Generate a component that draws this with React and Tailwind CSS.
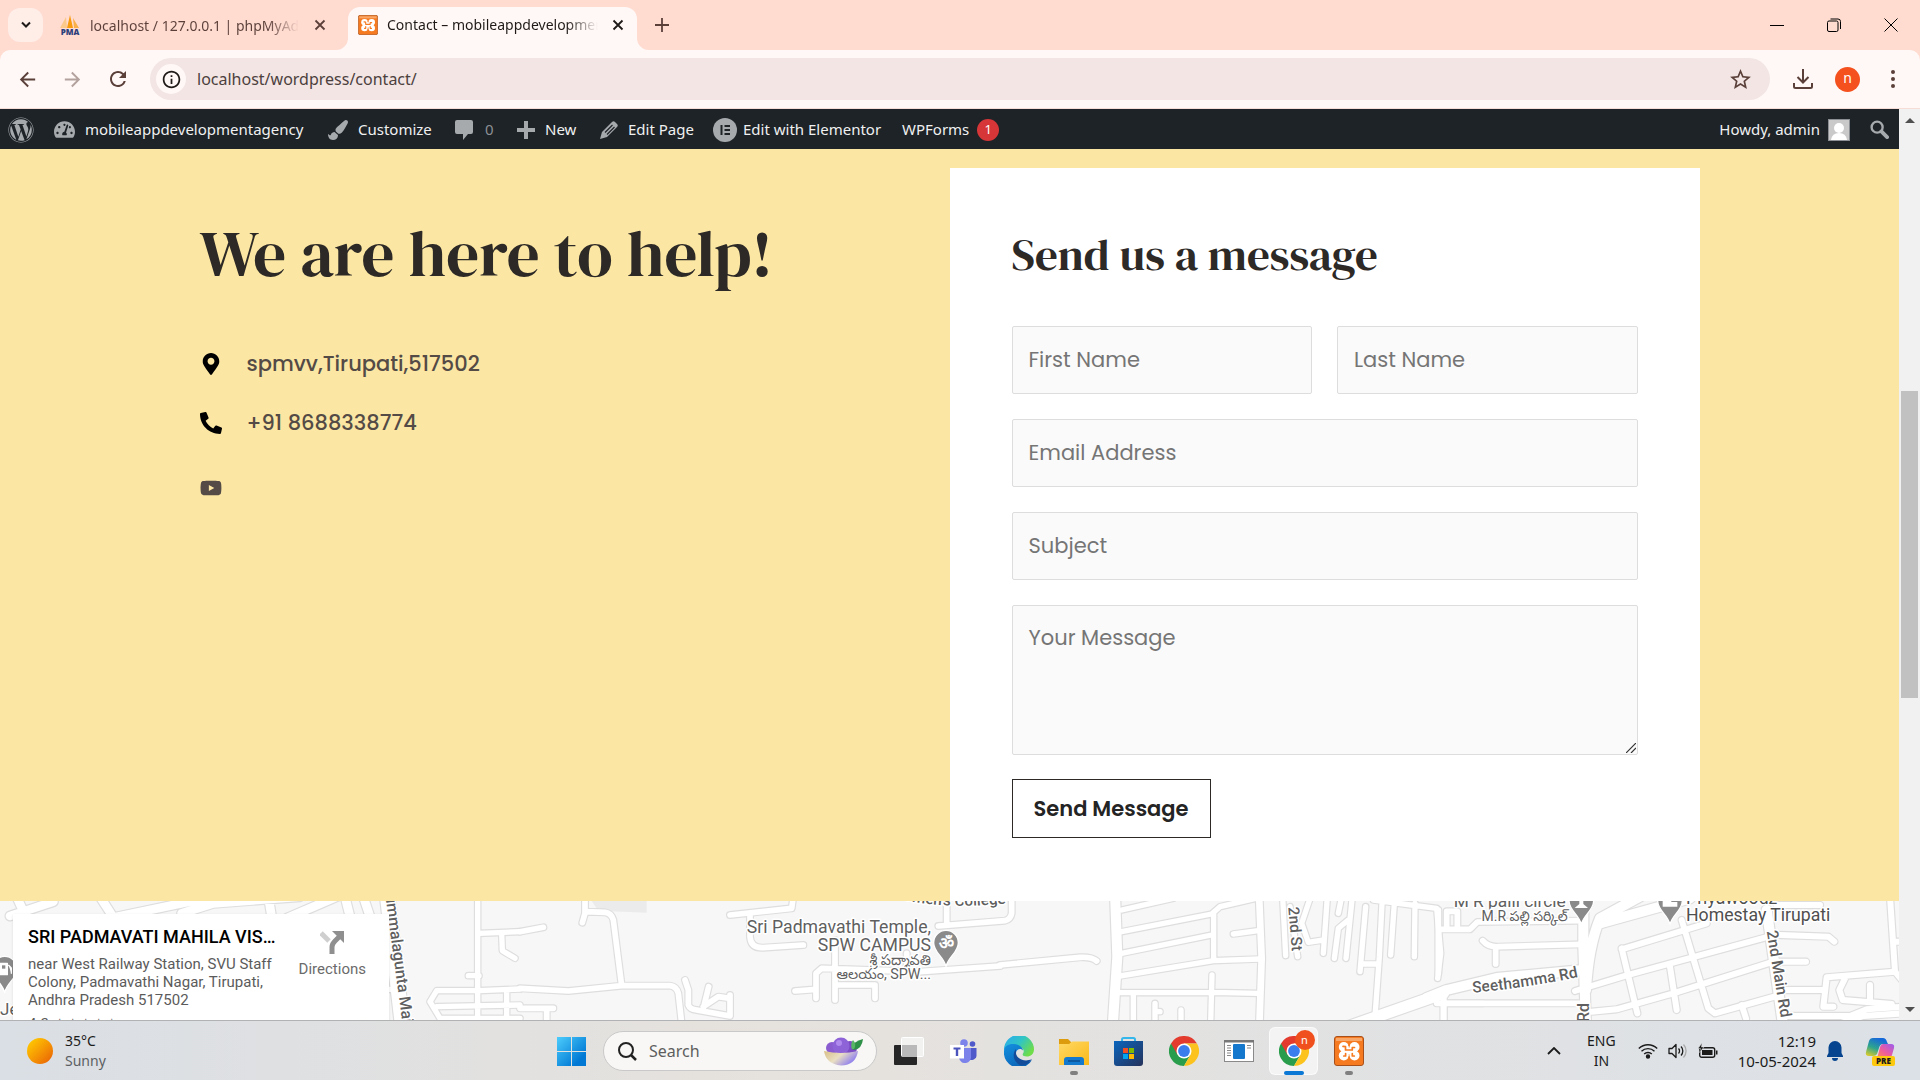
import React from "react";
import { FaWordpress, FaTachometerAlt, FaPaintBrush, FaMapMarkerAlt, FaPhoneAlt, FaYoutube } from "react-icons/fa";
import { MdStarBorder, MdRefresh, MdInfoOutline, MdArrowBack, MdArrowForward } from "react-icons/md";

const UI = "font-['Segoe_UI','Noto_Sans',sans-serif]";
const POP = "font-['Poppins','Inter',sans-serif]";
const SERIF = "font-['DM_Serif_Display','Liberation_Serif',serif]";

function CloseX({ className }) {
  return (
    <svg viewBox="0 0 12 12" className={className} fill="none" stroke="currentColor" strokeWidth="1.8">
      <path d="M1.5 1.5l9 9M10.5 1.5l-9 9" />
    </svg>
  );
}

function PmaIcon() {
  return (
    <svg viewBox="0 0 22 20" className="h-5 w-[22px] shrink-0">
      <path d="M7 2L1 13h7z" fill="#fbc98a" />
      <path d="M11 0L8 13h6z" fill="#f89c0e" />
      <path d="M14 3l1 10h5z" fill="#f9b04a" />
      <text x="11" y="19.500" fontSize="8" fontWeight="800" textAnchor="middle" fill="#2c3f7c" fontFamily="Open Sans">PMA</text>
    </svg>
  );
}

function XamppIcon({ className }) {
  return (
    <svg viewBox="0 0 30 30" className={className}>
      <rect x="0.500" y="0.500" width="29" height="29" rx="2.500" fill="#f57a20" stroke="#a8501b" />
      <path d="M2 2h26v3H2z" fill="#f9a669" />
      <g fill="#fff">
        <circle cx="9.800" cy="11" r="5" /><circle cx="20.500" cy="11" r="5" />
        <circle cx="9.800" cy="19.500" r="5" /><circle cx="20.500" cy="19.500" r="5" />
        <path d="M10 10l3 1.500h4L20 10l2 5.300-2 5-3-1.800h-4L10 20.300 8 15.300z" />
      </g>
      <path d="M9 10.300l2.500.400v3.300h6.800v-2.500h2.200M9.800 20h1.800v-2.500M18.300 17.500V20h2" fill="none" stroke="#f57a20" strokeWidth="1.700" strokeLinejoin="round" strokeLinecap="round" />
      <path d="M4 15.300l2.500 0M24 15.300h2.500M15 8.500v1.500M15 20.500v2" stroke="#f57a20" strokeWidth="1.500" />
    </svg>
  );
}

function TabStrip() {
  return (
    <header className="flex h-[50px] shrink-0 items-end bg-[#ffdbd0] text-[#1f1a18]">
      <button aria-label="Search tabs" className="mb-2 ml-2 flex h-[34px] w-[35px] items-center justify-center rounded-xl bg-[#ffede8]">
        <svg viewBox="0 0 12 8" className="h-2 w-3" fill="none" stroke="currentColor" strokeWidth="2"><path d="M2 1.500l4 4 4-4" /></svg>
      </button>
      <div className="flex h-[50px] w-[305px] shrink-0 items-center pl-4 text-[#5b403a]">
        <PmaIcon />
        <span className="ml-[9px] w-[209px] overflow-hidden whitespace-nowrap bg-linear-to-r from-[#5b403a] from-85% to-transparent bg-clip-text text-[14px] text-transparent">localhost / 127.0.0.1 | phpMyAdmin</span>
        <button aria-label="Close tab" className="ml-[15px]"><CloseX className="h-3 w-3" /></button>
      </div>
      <div className="relative flex h-[43px] w-[289px] shrink-0 items-center rounded-t-xl bg-[#fff8f6] pl-2.5 pb-2">
        <svg viewBox="0 0 12 12" className="absolute -left-3 bottom-0 h-3 w-3" fill="#fff8f6"><path d="M12 0v12H0A12 12 0 0 0 12 0z" /></svg>
        <svg viewBox="0 0 12 12" className="absolute -right-3 bottom-0 h-3 w-3" fill="#fff8f6"><path d="M0 0v12h12A12 12 0 0 1 0 0z" /></svg>
        <XamppIcon className="h-5 w-5 shrink-0" />
        <span className="ml-[9px] w-[211px] overflow-hidden whitespace-nowrap bg-linear-to-r from-[#1f1a18] from-85% to-transparent bg-clip-text text-[14px] text-transparent">Contact – mobileappdevelopmentagency</span>
        <button aria-label="Close tab" className="ml-3.5"><CloseX className="h-3 w-3" /></button>
      </div>
      <button aria-label="New tab" className="mb-[18px] ml-[18px] text-[#5b403a]">
        <svg viewBox="0 0 14 14" className="h-3.5 w-3.5" stroke="currentColor" strokeWidth="1.800"><path d="M7 0v14M0 7h14" /></svg>
      </button>
      <div className="mb-[18px] ml-auto flex items-center gap-[43px] pr-[22px]">
        <button aria-label="Minimize"><svg viewBox="0 0 14 14" className="h-3.5 w-3.5" stroke="#000"><path d="M0 7.500h14" /></svg></button>
        <button aria-label="Restore"><svg viewBox="0 0 14 14" className="h-3.5 w-3.5" fill="none" stroke="#000"><rect x="0.500" y="3" width="10.500" height="10.500" rx="1.500" /><path d="M3.500 1h7.500a2.500 2.500 0 0 1 2.500 2.500V11" /></svg></button>
        <button aria-label="Close"><svg viewBox="0 0 14 14" className="h-3.5 w-3.5" stroke="#000"><path d="M.5.5l13 13M13.500.5l-13 13" /></svg></button>
      </div>
    </header>
  );
}

function Toolbar() {
  return (
    <div className="bg-[#ffdbd0]">
      <div className="flex h-[59px] items-center rounded-t-[10px] border-b border-[#f6ddd5] bg-[#fff8f6] text-[#5b403a]">
        <button aria-label="Back" className="ml-4"><MdArrowBack size={23} /></button>
        <button aria-label="Forward" className="ml-[22px] text-[#b3a19d]"><MdArrowForward size={23} /></button>
        <button aria-label="Reload" className="ml-[22px]"><MdRefresh size={24} /></button>
        <div className="ml-5 flex h-[42px] flex-1 items-center rounded-full bg-[#f2e5e4] pl-1.5 pr-[17px]">
          <button aria-label="Site information" className="flex h-[30px] w-[30px] items-center justify-center rounded-full bg-[#fff8f6] text-[#1f1a18]"><MdInfoOutline size={21} /></button>
          <label htmlFor="address" className="sr-only">Address</label>
          <input id="address" defaultValue="localhost/wordpress/contact/" className="ml-[11px] min-w-0 flex-1 bg-transparent text-[16px] text-[#4c403d] outline-none" />
          <button aria-label="Bookmark"><MdStarBorder size={25} /></button>
        </div>
        <button aria-label="Downloads" className="ml-[23px]">
          <svg viewBox="0 0 20 20" className="h-5 w-5" fill="none" stroke="currentColor" strokeWidth="2"><path d="M10 0v13M4.500 8l5.500 5.500L15.500 8M1 14v3.500a1.500 1.500 0 0 0 1.500 1.500h15a1.500 1.500 0 0 0 1.500-1.500V14" /></svg>
        </button>
        <button aria-label="Profile" className="ml-[22px] flex h-[25px] w-[25px] items-center justify-center rounded-full bg-[#f4511e] pb-0.5 text-sm leading-none text-white">n</button>
        <button aria-label="Menu" className="ml-[31px] mr-[25px]">
          <svg viewBox="0 0 4 18" className="h-[18px] w-1" fill="currentColor"><circle cx="2" cy="2" r="2" /><circle cx="2" cy="9" r="2" /><circle cx="2" cy="16" r="2" /></svg>
        </button>
      </div>
    </div>
  );
}

function AdminBar() {
  const link = "flex shrink-0 items-center";
  return (
    <nav className="flex h-10 shrink-0 items-center bg-[#1d2327] pt-px text-[15px] text-[#f0f0f1]">
      <a href="#wp" aria-label="WordPress" className="ml-2 text-[#a7aaad]"><FaWordpress size={26} /></a>
      <a href="#site" className={`${link} ml-5 w-[252px] gap-2.5`}><FaTachometerAlt size={21} className="text-[#a7aaad]" />mobileappdevelopmentagency</a>
      <a href="#customize" className={`${link} ml-[22px] w-[106px] gap-2.5`}><FaPaintBrush size={20} className="text-[#a7aaad]" />Customize</a>
      <a href="#comments" className={`${link} ml-[21px] w-10 gap-3 text-[#8c8f94]`}>
        <svg viewBox="0 0 18 20" className="h-5 w-[18px]" fill="#a7aaad"><path d="M2 0h14a2 2 0 0 1 2 2v10a2 2 0 0 1-2 2h-3l-5 6v-6H2a2 2 0 0 1-2-2V2a2 2 0 0 1 2-2z" /></svg>0
      </a>
      <a href="#new" className={`${link} ml-[22px] w-[63px] gap-2.5`}>
        <svg viewBox="0 0 18 18" className="h-[18px] w-[18px]" fill="#a7aaad"><path d="M7 0h4v7h7v4h-7v7H7v-7H0V7h7z" /></svg>New
      </a>
      <a href="#edit" className={`${link} ml-5 w-[98px] gap-2.5`}>
        <svg viewBox="0 0 18 18" className="h-[18px] w-[18px]"><path d="M12 1q1.500-1.500 3 0l2 2q1.500 1.500 0 3L7 16l-7 2 2-7z" fill="#a7aaad" /><path d="M12.500 4L5 11.500M14.500 6L7 13.500" stroke="#1d2327" strokeWidth="1.200" /></svg>Edit Page
      </a>
      <a href="#elementor" className={`${link} ml-[15px] w-[172px] gap-1.5`}>
        <svg viewBox="0 0 24 24" className="h-6 w-6"><circle cx="12" cy="12" r="12" fill="#a7aaad" /><path d="M7.500 7h2v10h-2zM11.500 7h5.500v2h-5.500zM11.500 11h5.500v2h-5.500zM11.500 15h5.500v2h-5.500z" fill="#1d2327" /></svg>
        Edit with Elementor
      </a>
      <a href="#wpforms" className={`${link} ml-[17px] gap-2`}>WPForms<span className="flex h-[22px] w-[22px] items-center justify-center rounded-full bg-[#d63638] text-[13px] text-white">1</span></a>
      <a href="#profile" className={`${link} ml-auto gap-2`}>Howdy, admin
        <svg viewBox="0 0 22 22" className="h-[22px] w-[22px]"><rect width="22" height="22" fill="#8c8f94" /><rect x="1" y="1" width="20" height="20" fill="#c9c9c9" /><circle cx="11" cy="9" r="5" fill="#fff" /><path d="M3 21q1-7 8-7t8 7z" fill="#fff" /></svg>
      </a>
      <a href="#search" aria-label="Search" className="ml-5 mr-2.5">
        <svg viewBox="0 0 20 20" className="h-[19px] w-[19px]" fill="none" stroke="#a7aaad"><circle cx="7.500" cy="7.500" r="5.800" strokeWidth="2.500" /><path d="M12 12l6 6" strokeWidth="4" strokeLinecap="round" /></svg>
      </a>
    </nav>
  );
}

function Field({ id, label, type = "text" }) {
  return (
    <div className="flex">
      <label htmlFor={id} className="sr-only">{label}</label>
      <input id={id} type={type} placeholder={label} className="h-[68px] w-full min-w-0 rounded-xs border border-[#ddd] bg-[#fafafa] px-4 pb-0.5 text-[21px] outline-none placeholder:text-[#757575]" />
    </div>
  );
}

function ContactSection() {
  return (
    <section className="shrink-0 bg-[#fbe7a3] px-4 pt-[19px]">
      <div className={`mx-auto grid max-w-[1500px] grid-cols-2 ${POP}`}>
        <div className="pt-12">
          <h1 className={`${SERIF} text-[65px] leading-[76px] font-normal text-[#2d2926]`}>We are here to help!</h1>
          <ul className="mt-14 flex flex-col gap-[27px] text-[21px] leading-8 font-medium text-[#544a46]">
            <li className="flex items-center"><span className="flex w-[47px]"><FaMapMarkerAlt size={22} className="text-black" /></span>spmvv,Tirupati,517502</li>
            <li className="flex items-center"><span className="flex w-[47px]"><FaPhoneAlt size={22} className="text-black" /></span>+91 8688338774</li>
          </ul>
          <a href="#youtube" aria-label="YouTube" className="mt-[38px] inline-flex text-[#544a46]"><FaYoutube size={22} /></a>
        </div>
        <form className="bg-white px-[62px] pt-[59px] pb-[63px]" onSubmit={(e) => e.preventDefault()}>
          <h2 className={`${SERIF} text-[45px] leading-[54px] font-normal text-[#2d2926]`}>Send us a message</h2>
          <div className="mt-[45px] grid grid-cols-2 gap-[25px]">
            <Field id="first" label="First Name" />
            <Field id="last" label="Last Name" />
            <div className="col-span-2"><Field id="email" label="Email Address" type="email" /></div>
            <div className="col-span-2"><Field id="subject" label="Subject" /></div>
            <div className="relative col-span-2 flex">
              <label htmlFor="message" className="sr-only">Your Message</label>
              <textarea id="message" placeholder="Your Message" className="h-[150px] w-full resize-none rounded-xs border border-[#ddd] bg-[#fafafa] px-4 py-4 text-[21px] leading-8 outline-none placeholder:text-[#757575]" />
              <svg viewBox="0 0 10 10" className="pointer-events-none absolute right-0.5 bottom-0.5 h-2.5 w-2.5" stroke="#333" strokeWidth="1.200"><path d="M0 10L10 0M5 10l5-5" /></svg>
            </div>
          </div>
          <button className="mt-6 h-[59px] border border-[#2d2926] px-[21px] text-[21px] font-semibold text-[#242424]">Send Message</button>
        </form>
      </div>
    </section>
  );
}

/* Map streets: [x origin of the district, street width, path] */
const ROADS = [
  [0, 26, "M50 20L75 75M30 78L160 35M300 20L345 90M330 85L640 20M545 70L640 40M640 40L900 20M805 20L815 80M860 85L1010 20M1035 20L1050 80M1090 20L1110 80"],
  [0, 44, "M1162 20L1205 390L1208 420"],
  [0, 16, "M1433 20V400M1437 130L1560 125M1505 130L1507 182L1545 205M1405 257H1437M1560 297L1437 302H1310L1290 335L1320 385H1560M1520 300V390M1310 350L1560 345M1150 298H1185"],
  [1560, 17, "M0 295L145 303L305 287H450Q470 290 475 310L485 400M305 287L280 90Q275 70 255 67L200 65M195 20V70L187 98M0 125L70 112M0 355H100M80 355V400"],
  [1560, 17, "M495 270L505 300V345Q510 358 530 360L630 378V315M550 355L566 290M550 350L595 320L630 325"],
  [1560, 17, "M630 75L815 55L820 20M690 75V140Q692 175 730 173L850 165M825 303L888 298V325V250L905 235L1200 245L1440 228M945 150V330M945 285H1065V325M1160 190V240"],
  [1560, 17, "M1255 108L1455 92Q1472 88 1475 70V20M1280 20V105"],
  [3000, 17, "M0 225L240 202Q275 200 290 213"],
  [3000, 30, "M345 10L352 200L338 410"],
  [3000, 16, "M365 60L520 25M365 125L635 72L660 50L790 20M365 190L635 135M360 258L640 212L780 207M641 72V212M700 132L775 122M355 308L640 307L775 310M636 255L632 400M400 310V400M465 340V400M465 365H480M543 360V400"],
  [3000, 20, "M777 10L785 205L778 410"],
  [3000, 16, "M848 20L857 197M870 50L893 200M932 20L905 100L925 157L970 150M982 20L970 190M1025 20L1015 70M1057 20L1038 205M1042 92L1015 115L1003 205M1097 50L1080 245M1085 222H1130M1147 20L1138 200L1125 380M1183 40L1172 195M1245 40L1243 200M1120 30L1310 55L1322 190L1313 265M1332 320V400M1332 340H1450"],
  [3000, 34, "M1040 412L1330 310"],
  [4320, 30, "M-40 324L20 300L170 264L430 240"],
  [4320, 17, "M-10 340H430M10 330V400M-5 60V250M20 64H52V112M20 64V118M-5 118H90L112 96L420 92M128 152Q145 172 175 170L425 163M167 175V222"],
  [4320, 30, "M430 30L430 170L438 410M600 20L480 85Q445 170 438 300M750 25L480 100"],
  [4320, 18, "M405 303L560 256L985 140M455 365L530 358L700 310L1000 215M545 178L800 100M545 175L592 370M725 90L805 355L825 370L1010 318M690 230L710 360M905 345L918 385"],
  [4320, 30, "M980 60L1000 200L1030 410"],
  [4320, 18, "M1020 135L1165 140L1183 155M1010 215H1098M1030 300H1145M1350 20L1365 245L1160 262L1150 350H1180M1365 245L1390 275M1215 265L1198 300L1208 330L1355 342M1290 285V335M1040 378H1230L1280 358L1390 350M1200 400L1270 378L1390 370M1365 155H1390M1010 45H1140"],
];

function Pin({ x, y, children }) {
  return (
    <g transform={`translate(${x} ${y})`}>
      <path d="M0 108C-6 78-37 66-37 36a37 37 0 0 1 74 0C37 66 6 78 0 108z" fill="#8a8a8a" stroke="#fff" strokeWidth="4" />
      {children}
    </g>
  );
}

function MapView() {
  const halo = { stroke: "#fff", strokeWidth: 9, paintOrder: "stroke", strokeLinejoin: "round" };
  return (
    <section aria-label="Map" className="relative min-h-[100px] flex-1 overflow-hidden bg-[#f7f7f7] font-['Roboto','Noto_Sans_Telugu',sans-serif]">
      <svg viewBox="0 33 5697 357" preserveAspectRatio="xMidYMin slice" className="block h-full w-full" fill="none" strokeLinecap="round" strokeLinejoin="round">
        <path d="M1775 33H1940V68L1795 62z" fill="#ebebeb" />
        <g stroke="#dedede">{ROADS.map(([o, w, d], i) => <path key={i} transform={`translate(${o} 0)`} strokeWidth={w + 7} d={d} />)}</g>
        <g stroke="#fff">{ROADS.map(([o, w, d], i) => <path key={i} transform={`translate(${o} 0)`} strokeWidth={w} d={d} />)}</g>
        <path id="tumma" d="M1152 -12L1217 473" />
        <path id="women" d="M2672 16Q2800 64 3040 38" />
        <path id="second" d="M3865 52L3877 200" />
        <path id="seeth" d="M4418 308Q4570 295 4730 262" />
        <path id="mainrd" d="M5300 124L5345 400" />
        <g fill="#5f5f5f" fontSize="48" style={halo}>
          <text fontWeight="500"><textPath href="#tumma">Tummalagunta Main Rd</textPath></text>
          <text fontWeight="500" fontSize="46"><textPath href="#women">Women's College</textPath></text>
          <text fontWeight="500" fontSize="46"><textPath href="#second">2nd St</textPath></text>
          <text fontWeight="500" fontSize="47"><textPath href="#seeth">Seethamma Rd</textPath></text>
          <text fontWeight="500" fontSize="47"><textPath href="#mainrd">2nd Main Rd</textPath></text>
          <text x="4766" y="396" fontWeight="500" transform="rotate(-90 4766 396)">Rd</text>
          <g textAnchor="end" fontSize="53">
            <text x="2793" y="130">Sri Padmavathi Temple,</text>
            <text x="2793" y="183">SPW CAMPUS</text>
            <text x="2793" y="226" fontSize="43">శ్రీ పద్మావతి</text>
            <text x="2793" y="267" fontSize="43">ఆలయం, SPW...</text>
            <text x="4697" y="50" fontSize="52">M R palli circle</text>
            <text x="4703" y="94" fontSize="42">M.R పల్లి సర్కిల్</text>
          </g>
          <g fontSize="53" fill="#4f4f4f">
            <text x="5058" y="41">Priyawoodz</text>
            <text x="5058" y="94">Homestay Tirupati</text>
          </g>
          <text x="0" y="374" fontSize="51">Je</text>
        </g>
        <Pin x={2838} y={122}><text y="54" fontSize="50" fontWeight="700" fill="#fff" textAnchor="middle">ॐ</text></Pin>
        <Pin x={4744} y={-4}><path d="M-20 58h40l-14-12V20H-6v26z" fill="#fff" /></Pin>
        <Pin x={5010} y={-4}><path d="M-22 30v24h44V40H4V30z" fill="#fff" /></Pin>
        <Pin x={14} y={200}><path d="M-14 20h22v34h-22zM12 26l8 8v16" fill="#fff" stroke="#fff" strokeWidth="4" /><rect x="-8" y="26" width="10" height="10" fill="#8a8a8a" /></Pin>
      </svg>
      <div className="absolute top-[13px] left-[13px] flex h-40 w-[376px] justify-between bg-white pt-[11px] pr-[23px] pl-[15px] shadow">
        <div className="w-[250px]">
          <h3 className="truncate text-[18px] leading-6 font-medium text-black">SRI PADMAVATI MAHILA VISVAVIDYALAYAM</h3>
          <p className="mt-1.5 text-[15px] leading-[18px] text-[#5b5b5b]">near West Railway Station, SVU Staff<br />Colony, Padmavathi Nagar, Tirupati,<br />Andhra Pradesh 517502</p>
          <p className="mt-1.5 text-[15px] leading-[18px] text-[#5b5b5b]">4.2 ★★★★☆</p>
        </div>
        <a href="#directions" className="mt-[5px] flex flex-col items-center text-[15px] text-[#6b6b6b]">
          <svg viewBox="0 0 24 24" className="h-6 w-6" fill="none"><path d="M1 3l8 8" stroke="#cfcfcf" strokeWidth="5" /><path d="M12 24v-7q0-3 3-6l5-5" stroke="#8f8f8f" strokeWidth="5" /><path d="M12 1h12v12z" fill="#8f8f8f" /></svg>
          <span className="mt-1">Directions</span>
        </a>
      </div>
    </section>
  );
}

function ScrollBar() {
  return (
    <div aria-hidden="true" className="flex w-[21px] shrink-0 flex-col items-center bg-[#f1f1f1]">
      <svg viewBox="0 0 10 5" className="mt-[9px] h-[5px] w-2.5 shrink-0" fill="#505050"><path d="M0 5l5-5 5 5z" /></svg>
      <div className="flex-[268]" />
      <div className="w-[17px] flex-[306] bg-[#c1c1c1]" />
      <div className="flex-[309]" />
      <svg viewBox="0 0 10 5" className="mb-2 h-[5px] w-2.5 shrink-0" fill="#505050"><path d="M0 0l5 5 5-5z" /></svg>
    </div>
  );
}

function ChromeLogo() {
  return (
    <svg viewBox="0 0 30 30" className="h-[30px] w-[30px]">
      <path d="M15 15L2 7.500A15 15 0 0 1 28 7.500L15 7.500z" fill="#e33b2e" />
      <path d="M2 7.500A15 15 0 0 0 15 30L21.500 18.700 15 15z" fill="#2a9d4c" />
      <path d="M28 7.500A15 15 0 0 1 15 30L21.500 18.700 15 7.500z" fill="#fcc31e" />
      <path d="M2 7.500L8.500 18.700 15 7.500z" fill="#e33b2e" />
      <circle cx="15" cy="15" r="7.500" fill="#fff" /><circle cx="15" cy="15" r="5.900" fill="#3b7ded" />
    </svg>
  );
}

function EdgeLogo() {
  return (
    <svg viewBox="0 0 30 30" className="h-[30px] w-[30px]">
      <defs>
        <linearGradient id="eg1" x1="0" y1="0" x2="1" y2="0.600"><stop offset="0" stopColor="#2aa8f2" /><stop offset="0.550" stopColor="#31c5c4" /><stop offset="1" stopColor="#6fdc4a" /></linearGradient>
        <linearGradient id="eg2" x1="0" y1="0" x2="0.600" y2="1"><stop offset="0" stopColor="#1491e0" /><stop offset="1" stopColor="#0b62b5" /></linearGradient>
      </defs>
      <path d="M0 14A15 15 0 0 1 30 13.500c0 4.500-3.500 7-7 7-4 0-5-1.500-4-3 2-3-.5-7-5-7-6 0-12 2-14 3.500z" fill="url(#eg1)" />
      <path d="M0 15C0 10 5 7.500 10 8c5 .500 9 3.500 9 6.500-2-3-7-1.500-7 3 0 5 4 9 9 9 3 0 5-.800 7-2.500A15 15 0 0 1 0 15z" fill="url(#eg2)" />
      <path d="M12 13c-5 6-1.500 15 6 16.600A15 15 0 0 0 28 23c-8 4-16-1-16-6z" fill="#124c9a" />
    </svg>
  );
}

function TaskIcon({ label, dot, active, children }) {
  return (
    <button aria-label={label} className="relative flex h-[60px] w-[55px] shrink-0 items-center justify-center">
      {active && <span className="absolute inset-x-[3px] inset-y-1.5 rounded-md border border-white/60 bg-white/60" />}
      <span className="relative">{children}</span>
      {dot && <span className="absolute bottom-1.5 h-1 w-2 rounded-full bg-[#808080]" />}
      {active && <span className="absolute bottom-1.5 h-1 w-5 rounded-full bg-[#0a78d4]" />}
    </button>
  );
}

function Taskbar() {
  return (
    <footer className="grid h-[60px] shrink-0 grid-cols-[1fr_auto_1fr] items-center border-t border-[#b0b2b4] bg-linear-to-r from-[#dadfe5] via-[#e6e2dd] via-40% to-[#dce1e7] pb-[3px] text-[#1b1b1b]">
      <button className="flex items-center gap-3 pl-[27px] text-left text-[14px] leading-5">
        <span className="h-[26px] w-[26px] rounded-full bg-linear-to-br from-[#ffd400] to-[#e65a05]" />
        <span><span className="block">35°C</span><span className="block text-[#5c5f63]">Sunny</span></span>
      </button>
      <div className="flex items-center">
        <TaskIcon label="Start">
          <svg viewBox="0 0 29 29" className="h-[29px] w-[29px]"><defs><linearGradient id="win" x1="0" y1="0" x2="1" y2="1"><stop stopColor="#4ccdfc" /><stop offset="0.800" stopColor="#0078d4" /></linearGradient></defs><path d="M0 0h14v14H0zM15 0h14v14H15zM0 15h14v14H0zM15 15h14v14H15z" fill="url(#win)" /></svg>
        </TaskIcon>
        <div className="mr-1 ml-1 flex h-10 w-[274px] shrink-0 items-center rounded-full border border-[#c9c9c9] bg-[#f8f7f5] pl-3.5 pr-3">
          <svg viewBox="0 0 19 19" className="h-[19px] w-[19px] shrink-0" fill="none" stroke="#222" strokeWidth="2"><circle cx="8" cy="8" r="7" /><path d="M13 13l5 5" strokeWidth="2.500" /></svg>
          <label htmlFor="task-search" className="sr-only">Search</label>
          <input id="task-search" placeholder="Search" className="ml-3 min-w-0 flex-1 bg-transparent text-[16px] outline-none placeholder:text-[#5e5e5e]" />
          <svg viewBox="0 0 40 29" className="h-[29px] w-10 shrink-0">
            <defs><linearGradient id="bowl" x1="0" y1="0" x2="1" y2="0.500"><stop stopColor="#d8bf86" /><stop offset="0.500" stopColor="#eadfc3" /><stop offset="1" stopColor="#8c7bf0" /></linearGradient></defs>
            <circle cx="8" cy="11" r="6" fill="#8a5cd0" /><circle cx="26" cy="11" r="7" fill="#7b4cc4" /><circle cx="17" cy="9" r="8.500" fill="#8f63d8" /><circle cx="15" cy="6" r="3" fill="#b08aec" />
            <path d="M28 12q1-8 11-10-1 10-9 11z" fill="#2f9148" /><path d="M28 12q-2-5 1-9 4 4 1 9z" fill="#57b765" />
            <path d="M0 14q17 4 34 0-2 14-17 14.500Q2 27 0 14z" fill="url(#bowl)" />
          </svg>
        </div>
        <TaskIcon label="Task view">
          <svg viewBox="0 0 30 28" className="h-7 w-[30px]"><rect y="8" width="23" height="20" rx="1" fill="#262626" /><rect x="7.500" y="0.500" width="22" height="19" rx="1" fill="#f4f4f4" fillOpacity="0.850" stroke="#fff" /><path d="M8 8h15v12H8z" fill="#b9b9b9" /></svg>
        </TaskIcon>
        <TaskIcon label="Teams">
          <svg viewBox="0 0 27 24" className="h-6 w-[27px]"><circle cx="22.500" cy="5" r="2.800" fill="#5059c9" /><circle cx="14" cy="4" r="3.800" fill="#7b83eb" /><path d="M18 9h8.500v8a5 5 0 0 1-8 3z" fill="#5059c9" /><path d="M9 9h12v8a6 6 0 0 1-12 2z" fill="#7b83eb" /><path d="M0 6h14v13.500H0z" fill="#fff" /><path d="M3.500 8.500h7v2H8.200V17H5.800v-6.500H3.500z" fill="#4b53bc" /></svg>
        </TaskIcon>
        <TaskIcon label="Edge"><EdgeLogo /></TaskIcon>
        <TaskIcon label="File Explorer" dot>
          <svg viewBox="0 0 30 27" className="h-[27px] w-[30px]"><defs><linearGradient id="fold" x1="0" y1="0" x2="1" y2="1"><stop stopColor="#ffd966" /><stop offset="1" stopColor="#fbb917" /></linearGradient></defs><path d="M0 1h9l3 3v5H0z" fill="#dd9c0d" /><path d="M0 6h10l3-2.500h17V27H0z" fill="url(#fold)" /><path d="M5 27v-5q0-3 3-3h14q3 0 3 3v5z" fill="#1379cf" /><path d="M9 23h12" stroke="#0a4f91" strokeWidth="1.500" /></svg>
        </TaskIcon>
        <TaskIcon label="Microsoft Store">
          <svg viewBox="0 0 29 29" className="h-[29px] w-[29px]"><defs><linearGradient id="store" x1="0" y1="0" x2="1" y2="1"><stop stopColor="#0a65bd" /><stop offset="1" stopColor="#26325a" /></linearGradient></defs><path d="M8 6V2.500Q8 1 9.500 1h10Q21 1 21 2.500V6" fill="none" stroke="#35b7ec" strokeWidth="2" /><path d="M0 4h29v22a3 3 0 0 1-3 3H3a3 3 0 0 1-3-3z" fill="url(#store)" /><path d="M9 11h5v5H9z" fill="#f25022" /><path d="M15 11h5v5h-5z" fill="#7fba00" /><path d="M9 17h5v5H9z" fill="#00a4ef" /><path d="M15 17h5v5h-5z" fill="#ffb900" /></svg>
        </TaskIcon>
        <TaskIcon label="Chrome"><ChromeLogo /></TaskIcon>
        <TaskIcon label="Reader">
          <svg viewBox="0 0 30 22" className="h-[22px] w-[30px]"><rect x="0.500" y="0.500" width="29" height="21" fill="#fff" stroke="#8a8a8a" /><path d="M0 0h30v2.500H0z" fill="#777" /><rect x="9" y="4" width="12" height="15" rx="1" fill="#1678cc" /><path d="M3 5.500h4M3 8h4M3 10.500h4M3 13h4M3 15.500h4M23 5.500h4M23 8h4" stroke="#888" /></svg>
        </TaskIcon>
        <TaskIcon label="Chrome profile window" active>
          <ChromeLogo />
          <span className="absolute -top-1.5 left-4 flex h-5 w-5 items-center justify-center rounded-full bg-[#f0501e] pb-0.5 text-[11px] leading-none text-white">n</span>
        </TaskIcon>
        <TaskIcon label="XAMPP" dot><XamppIcon className="h-[30px] w-[30px]" /></TaskIcon>
      </div>
      <div className="flex items-center justify-end pr-[25px] text-[14px] leading-5">
        <button aria-label="Hidden icons"><svg viewBox="0 0 14 8" className="h-2 w-3.5" fill="none" stroke="#1b1b1b" strokeWidth="1.800"><path d="M1 7l6-6 6 6" /></svg></button>
        <button className="ml-[26px] text-center">ENG<br />IN</button>
        <button aria-label="Network, sound and battery" className="ml-[22px] flex items-center gap-2.5">
          <svg viewBox="0 0 20 16" className="h-4 w-5" fill="none" stroke="#1b1b1b" strokeWidth="1.400"><path d="M.8 5.500a13 13 0 0 1 18.400 0M3.500 8.300a9.200 9.200 0 0 1 13 0M6.200 11a5.400 5.400 0 0 1 7.600 0" /><circle cx="10" cy="13.500" r="1.500" fill="#1b1b1b" /></svg>
          <svg viewBox="0 0 20 16" className="h-4 w-5" fill="none" stroke="#1b1b1b" strokeWidth="1.300"><path d="M1 5.500h3l4-4v13l-4-4H1z" strokeLinejoin="round" /><path d="M10.500 5.500a3.500 3.500 0 0 1 0 5M13 3.500a6.500 6.500 0 0 1 0 9" /><path d="M15.500 1.500a9.500 9.500 0 0 1 0 13" stroke="#aaa" /></svg>
          <svg viewBox="0 0 20 16" className="h-4 w-5"><rect x="1.700" y="4.700" width="15" height="9.600" rx="2" fill="none" stroke="#1b1b1b" strokeWidth="1.400" /><rect x="4" y="7" width="10.500" height="5" fill="#1b1b1b" /><path d="M18 7.500h1.500v4H18z" fill="#1b1b1b" /><path d="M4 0L0 5.500h2.500L1.500 9.500 6 4H3.500z" fill="#1b1b1b" stroke="#e0e2e4" strokeWidth="0.500" /></svg>
        </button>
        <button className="ml-5 text-right text-[15px]">12:19<br />10-05-2024</button>
        <button aria-label="Notifications" className="ml-[11px]">
          <svg viewBox="0 0 16 20" className="h-5 w-4" fill="#07448f"><path d="M8 0a6.500 6.500 0 0 1 6.500 6.500V12l1.500 3v1H0v-1l1.500-3V6.500A6.500 6.500 0 0 1 8 0zM5 17h6a3 3 0 0 1-6 0z" /></svg>
        </button>
        <button aria-label="Copilot" className="ml-[22px]">
          <svg viewBox="0 0 30 29" className="h-[29px] w-[30px]">
            <defs><linearGradient id="cpa" x1="0.500" y1="0" x2="0" y2="1"><stop stopColor="#1669d8" /><stop offset="0.500" stopColor="#2fa58d" /><stop offset="1" stopColor="#f0d020" /></linearGradient><linearGradient id="cpb" x1="1" y1="0" x2="0" y2="1"><stop stopColor="#9a5cf0" /><stop offset="0.500" stopColor="#ee5c9c" /><stop offset="1" stopColor="#ff9a3c" /></linearGradient></defs>
            <path d="M8 1h10q3 0 4 4l1 2h-5q-3 0-4 4l-2 6q-1 2-4 2H4q-4 0-3-4L4 4q1-3 4-3z" fill="url(#cpa)" />
            <path d="M18 7h8q4 0 3 4l-2 7q-1 4-5 4H9q3 0 4-4l2-8q1-3 3-3z" fill="url(#cpb)" />
            <rect x="7" y="19" width="23" height="10" rx="2" fill="#fdc90f" />
            <text x="18.500" y="27" fontSize="8" fontWeight="800" textAnchor="middle" fill="#1b1b1b" fontFamily="Open Sans">PRE</text>
          </svg>
        </button>
      </div>
    </footer>
  );
}

export default function App() {
  return (
    <div className={`flex h-screen min-w-[1280px] flex-col overflow-hidden ${UI}`}>
      <TabStrip />
      <Toolbar />
      <div className="flex min-h-0 flex-1">
        <main className="flex min-w-0 flex-1 flex-col overflow-hidden">
          <AdminBar />
          <ContactSection />
          <MapView />
        </main>
        <ScrollBar />
      </div>
      <Taskbar />
    </div>
  );
}
